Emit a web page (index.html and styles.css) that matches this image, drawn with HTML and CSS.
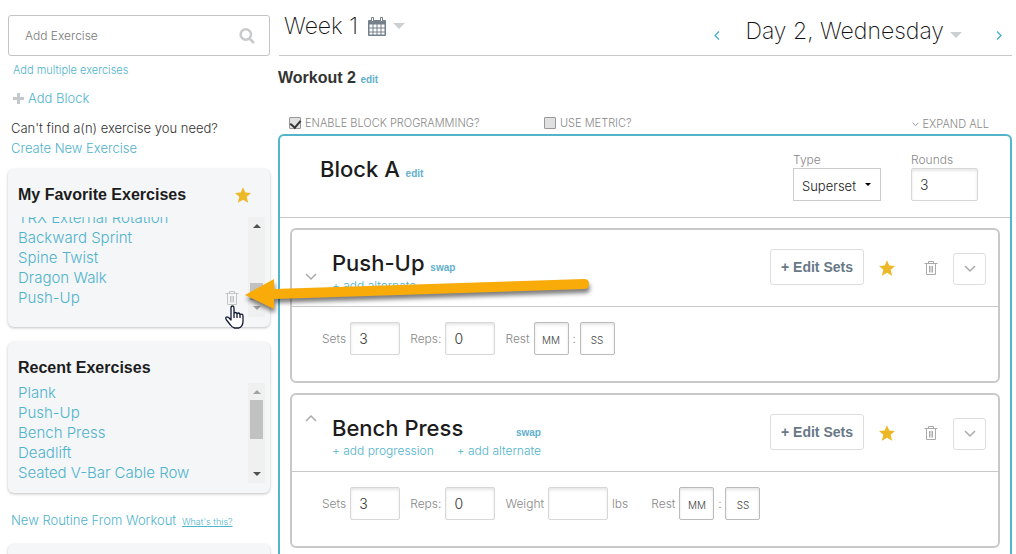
FILE: index.html
```
<!DOCTYPE html>
<html lang="en">
  <head>
    <meta charset="utf-8">
    <meta name="viewport" content="width=device-width, initial-scale=1">
    <title>Workout Builder</title>
    <link rel="stylesheet" href="styles.css">
  </head>
  <body>
    <!-- shared icons -->
    <svg class="sprite" aria-hidden="true">
      <symbol id="star" viewBox="0 0 16 16">
        <path fill="#ecb827" d="M8 .2l2.300 5.300 5.700.5-4.300 3.800 1.400 6L8 12.800l-5.100 3 1.400-6L0 6l5.700-.5z"/>
      </symbol>
      <symbol id="trash" viewBox="0 0 14 15">
        <path fill="none" stroke="currentColor" d="M.5 2.500h13M4.500 2V.5h5V2M2.500 3v10.500h9V3M5.500 5v6.500M7 5v6.500M8.500 5v6.500"/>
      </symbol>
      <symbol id="chevron" viewBox="0 0 12 8">
        <path fill="none" stroke="currentColor" stroke-width="1.500" d="M1 1l5 5 5-5"/>
      </symbol>
    </svg>

    <div class="page">
      <aside class="sidebar">
        <div class="search">
          <input type="text" placeholder="Add Exercise" aria-label="Add Exercise">
          <svg width="16" height="16" viewBox="0 0 16 16"><path fill="none" stroke="#c8cacb" stroke-width="2.500" d="M10.500 10.500l4.500 4.500M12 6.500a5.200 5.200 0 1 1-10.400 0a5.200 5.200 0 1 1 10.400 0z"/></svg>
        </div>
        <a class="add-multiple" href="#">Add multiple exercises</a>
        <a class="add-block" href="#"><svg width="11" height="11" viewBox="0 0 11 11"><path stroke="#c4c8ca" stroke-width="3" d="M0 5.500h11M5.500 0v11"/></svg>Add Block</a>
        <p class="help">Can't find a(n) exercise you need?<br><a href="#">Create New Exercise</a></p>

        <section class="panel favorites">
          <h3>My Favorite Exercises <svg width="16" height="16"><use href="#star"/></svg></h3>
          <div class="list">
            <ul>
              <li><a href="#">TRX External Rotation</a></li>
              <li><a href="#">Backward Sprint</a></li>
              <li><a href="#">Spine Twist</a></li>
              <li><a href="#">Dragon Walk</a></li>
              <li class="hovered"><a href="#">Push-Up</a><svg width="14" height="15"><use href="#trash"/></svg></li>
            </ul>
            <div class="scrollbar at-end"><i class="up"></i><span></span><i class="down"></i></div>
          </div>
        </section>

        <section class="panel recent">
          <h3>Recent Exercises</h3>
          <div class="list">
            <ul>
              <li><a href="#">Plank</a></li>
              <li><a href="#">Push-Up</a></li>
              <li><a href="#">Bench Press</a></li>
              <li><a href="#">Deadlift</a></li>
              <li><a href="#">Seated V-Bar Cable Row</a></li>
            </ul>
            <div class="scrollbar at-start"><i class="up"></i><span></span><i class="down"></i></div>
          </div>
        </section>

        <p class="routine"><a href="#">New Routine From Workout</a> <a class="whats-this" href="#">What's this?</a></p>
        <section class="panel next"></section>
      </aside>

      <main>
        <header class="schedule">
          <h1>Week 1
            <svg width="18" height="19" viewBox="0 0 18 19"><path fill="#74818c" d="M0 4q0-1 1-1h16q1 0 1 1v14q0 1-1 1H1q-1 0-1-1z"/><path fill="#fff" d="M1.500 7.500h3v3h-3zM5.500 7.500h3v3h-3zM9.500 7.500h3v3h-3zM13.500 7.500h3v3h-3zM1.500 11.500h3v3h-3zM5.500 11.500h3v3h-3zM9.500 11.500h3v3h-3zM13.500 11.500h3v3h-3zM1.500 15.500h3v2h-3zM5.500 15.500h3v2h-3zM9.500 15.500h3v2h-3zM13.500 15.500h3v2h-3z"/><path fill="#fff" stroke="#74818c" d="M3.500.5h2v4h-2zM12.500.5h2v4h-2z"/></svg>
            <i class="caret"></i>
          </h1>
          <nav>
            <a href="#" aria-label="Previous day"><svg width="6" height="9" viewBox="0 0 6 9"><path fill="none" stroke="currentColor" stroke-width="1.500" d="M5 .5l-4 4 4 4"/></svg></a>
            <h1>Day 2, Wednesday <i class="caret"></i></h1>
            <a href="#" aria-label="Next day"><svg width="6" height="9" viewBox="0 0 6 9"><path fill="none" stroke="currentColor" stroke-width="1.500" d="M1 .5l4 4-4 4"/></svg></a>
          </nav>
        </header>

        <h2 class="workout">Workout 2 <a class="small" href="#">edit</a></h2>

        <div class="options">
          <label class="enable"><input type="checkbox" checked> ENABLE BLOCK PROGRAMMING?</label>
          <label><input type="checkbox"> USE METRIC?</label>
          <button class="expand" type="button"><svg width="7" height="5" viewBox="0 0 12 8"><use href="#chevron"/></svg> EXPAND ALL</button>
        </div>

        <section class="block">
          <header class="block-head">
            <h2>Block A <a class="small" href="#">edit</a></h2>
            <div class="field">
              <label for="type">Type</label>
              <div class="select"><select id="type"><option>Superset</option></select></div>
            </div>
            <div class="field rounds">
              <label for="rounds">Rounds</label>
              <input id="rounds" type="text" value="3">
            </div>
          </header>

          <article class="exercise">
            <header>
              <button class="toggle" type="button" aria-label="Expand"><svg width="12" height="8"><use href="#chevron"/></svg></button>
              <div class="name">
                <h2>Push-Up <a class="small" href="#">swap</a></h2>
                <p><a href="#">+ add alternate</a></p>
              </div>
              <div class="actions">
                <button class="edit-sets" type="button">+ Edit Sets</button>
                <button class="icon" type="button" aria-label="Favorite"><svg width="16" height="16"><use href="#star"/></svg></button>
                <button class="icon trash" type="button" aria-label="Delete"><svg width="14" height="15"><use href="#trash"/></svg></button>
                <button class="more" type="button" aria-label="More"><svg width="12" height="8"><use href="#chevron"/></svg></button>
              </div>
            </header>
            <div class="sets">
              <label>Sets <input type="text" value="3"></label>
              <label>Reps: <input type="text" value="0"></label>
              <label>Rest <input class="time" type="text" placeholder="MM"></label>
              <span class="colon">:</span>
              <input class="time" type="text" placeholder="SS" aria-label="Rest seconds">
            </div>
          </article>

          <article class="exercise open">
            <header>
              <button class="toggle" type="button" aria-label="Collapse"><svg width="12" height="8"><use href="#chevron"/></svg></button>
              <div class="name">
                <h2>Bench Press <a class="small" href="#">swap</a></h2>
                <p><a href="#">+ add progression</a><a href="#">+ add alternate</a></p>
              </div>
              <div class="actions">
                <button class="edit-sets" type="button">+ Edit Sets</button>
                <button class="icon" type="button" aria-label="Favorite"><svg width="16" height="16"><use href="#star"/></svg></button>
                <button class="icon trash" type="button" aria-label="Delete"><svg width="14" height="15"><use href="#trash"/></svg></button>
                <button class="more" type="button" aria-label="More"><svg width="12" height="8"><use href="#chevron"/></svg></button>
              </div>
            </header>
            <div class="sets">
              <label>Sets <input type="text" value="3"></label>
              <label>Reps: <input type="text" value="0"></label>
              <label class="weight">Weight <input type="text"> lbs</label>
              <label>Rest <input class="time" type="text" placeholder="MM"></label>
              <span class="colon">:</span>
              <input class="time" type="text" placeholder="SS" aria-label="Rest seconds">
            </div>
          </article>
        </section>
      </main>
    </div>

    <!-- arrow and hand pointing at the delete icon -->
    <svg class="arrow" width="360" height="50" viewBox="0 0 360 50" aria-hidden="true">
      <path fill="#f8ab09" d="M5 25L34 9v10L344 9q5 0 5 5t-5 5L34 29v10z"/>
    </svg>
    <svg class="hand" width="19" height="24" viewBox="0 0 19 24" aria-hidden="true">
      <path fill="#fff" stroke="#111a33" stroke-width="1.300" stroke-linejoin="round" d="M6 14V3q0-2 1.500-2T9 3v6q0-1.500 1.500-1.500T12 9.500q0-1.500 1.500-1.500T15 10.500q0-1.300 1.500-1.300T18 11v5q0 6-4.500 7h-4Q7 22.500 5.500 20L1.500 15q-1.500-2.500 0-3t4.500 3zM9 9v4M12 10v3M15 11v2"/>
    </svg>
  </body>
</html>
```
FILE: styles.css
```
* { box-sizing: border-box; }
body { margin: 0; background: #fff; color: #333; font: 300 13px/20px Inter, "Liberation Sans", sans-serif; }
h1, h2, h3, p, ul { margin: 0; padding: 0; }
ul { list-style: none; }
a { color: #4fb3cc; text-decoration: none; }
svg { display: block; flex: none; }
button { margin: 0; padding: 0; border: 0; background: none; font: inherit; color: #aaa; }
input { font: inherit; }
input[type="text"] { border: 1px solid #d8d8d8; border-radius: 2px; background: #fff; box-shadow: inset 0 2px 3px rgba(0,0,0,0.1); color: #333; outline: 0; }
.sprite { position: absolute; width: 0; height: 0; }
.page { display: grid; grid-template-columns: 262px 1fr; gap: 8px; padding: 0 4px 0 8px; height: 100vh; overflow: hidden; }

/* sidebar */
.sidebar { padding-top: 15px; }
.search { display: flex; align-items: center; height: 41px; padding: 0 14px 0 16px; border: 1px solid #c4c4c4; border-radius: 3px; }
.search input[type="text"] { flex: 1; min-width: 0; padding: 0; border: 0; box-shadow: none; font-size: 12px; }
::placeholder { color: #777; opacity: 1; }
.add-multiple { display: block; margin: 4px 0 0 5px; font-size: 11px; }
.add-block { display: flex; align-items: center; gap: 4px; margin: 8px 0 0 5px; }
.help { margin: 10px 0 11px 3px; }
.panel { border-radius: 6px; background: #f4f6f8; box-shadow: 0 1px 3px rgba(0,0,0,0.25); padding: 16px 5px 10px 10px; }
.panel h3 { display: flex; justify-content: space-between; align-items: center; padding-right: 14px; font: bold 16px/20px "Liberation Sans", sans-serif; color: #1c1c1c; }
.favorites { margin-bottom: 15px; }
.list { display: flex; height: 100px; overflow: hidden; font-size: 15px; }
.favorites .list { margin-top: 12px; }
.recent .list { margin-top: 5px; }
.list ul { flex: 1; display: flex; flex-direction: column; }
.favorites ul { justify-content: flex-end; padding-bottom: 9px; }
.list li { flex: none; height: 20px; }
.hovered { display: flex; justify-content: space-between; align-items: center; padding-right: 9px; color: #c4c4c4; }
.scrollbar { display: flex; flex-direction: column; align-items: center; width: 17px; padding: 7px 0; background: #f0f0f0; }
.scrollbar i { border: 4px solid transparent; }
.scrollbar .up { border-top: 0; border-bottom-color: #505050; }
.scrollbar .down { border-bottom: 0; border-top-color: #505050; }
.scrollbar span { width: 13px; background: #c1c1c1; }
.at-start span { height: 39px; margin: 6px 0 auto; }
.at-end span { height: 17px; margin: auto 0 6px; }
.at-start .up { border-bottom-color: #a3a3a3; }
.at-end .down { border-top-color: #a3a3a3; }
.routine { margin: 17px 0 12px 3px; }
.whats-this { margin-left: 2px; font-size: 9px; text-decoration: underline; }
.next { height: 60px; }

/* main */
.schedule { display: flex; justify-content: space-between; height: 56px; padding: 0 10px 0 5px; border-bottom: 1px solid #c8c8c8; margin-left: 1px; }
h1 { display: flex; align-items: center; gap: 7px; height: 52px; font-size: 23px; font-weight: 200; color: #111; }
.schedule > h1 svg { margin-left: 3px; }
nav { display: flex; align-items: center; padding-top: 15px; }
nav h1 { gap: 6px; margin: -8px 34px 0 25px; }
.caret { border: 6px solid transparent; border-top-color: #ccd0d3; border-bottom: 0; }
nav .caret { margin-top: 8px; }
.small { font: bold 10px "Liberation Sans", sans-serif; color: #62b0cb; }
.workout { margin-top: 12px; font: bold 16px/20px "Liberation Sans", sans-serif; }
.options { display: flex; align-items: center; height: 46px; padding: 24px 23px 0 11px; font-size: 11px; color: #888; }
.options label { display: flex; align-items: center; gap: 4px; }
.options .enable { width: 255px; }
.options input { appearance: none; display: grid; place-items: center; width: 12px; height: 12px; margin: 0; border: 1px solid #999; border-radius: 1px; background: #e0e0e0; }
.options input:checked::after { content: ""; width: 5px; height: 8px; margin-bottom: 2px; border: solid #333; border-width: 0 2px 2px 0; transform: rotate(40deg); }
.expand { display: flex; align-items: center; gap: 3px; margin: 2px 0 0 auto; color: #888; }
.block { border: 2px solid #52b5cb; border-bottom: 0; border-radius: 6px 6px 0 0; min-height: 460px; }
.block h2, .name h2 { font: 500 22px/26px Inter, "Liberation Sans", sans-serif; color: #1c1c1c; }
.block-head { display: flex; height: 82px; padding: 14px 32px 0 40px; border-bottom: 1px solid #c8c8c8; }
.block-head h2 { flex: 1; padding-top: 6px; }
.field { width: 88px; font-size: 12px; color: #888; }
.field label { display: block; height: 18px; }
.rounds { width: 67px; margin-left: 30px; }
.rounds input { width: 100%; height: 33px; padding: 0 8px; font-size: 14px; }
.select { position: relative; }
.select select { appearance: none; width: 100%; height: 33px; padding: 2px 8px 0; border: 1px solid #ccc; background: #fff; color: #222; font: inherit; font-size: 13px; }
.select::after { content: ""; position: absolute; right: 10px; top: 15px; border: 3px solid transparent; border-top-color: #000; border-bottom: 0; }
.exercise { margin: 10px 10px 0; border: 2px solid #c8c8c8; border-radius: 6px; }
.exercise header { display: flex; height: 77px; border-bottom: 1px solid #c8c8c8; padding-right: 12px; }
.toggle { align-self: flex-start; margin: 43px 15px 0 13px; }
.open .toggle { margin-top: 19px; }
.open .toggle svg { transform: rotate(180deg); }
.name { padding-top: 20px; }
.name p { display: flex; gap: 23px; font-size: 12px; }
.open h2 { display: flex; justify-content: space-between; align-items: center; }
.open .small { padding-top: 8px; }
.actions { display: flex; align-items: flex-end; margin-left: auto; height: 55px; }
.edit-sets { width: 94px; height: 36px; border: 1px solid #ddd; border-radius: 3px; font: bold 14px "Liberation Sans", sans-serif; color: #687887; }
.icon { margin: 0 0 9px 15px; }
.trash { margin: 0 15px 9px 29px; }
.more { display: grid; place-items: center; width: 33px; height: 32px; border: 1px solid #ddd; border-radius: 3px; }
.sets { display: flex; align-items: flex-start; gap: 10px; height: 74px; padding: 15px 30px; font-size: 12px; color: #888; }
.sets label { display: flex; align-items: center; gap: 4px; }
.sets input[type="text"] { width: 50px; height: 33px; padding: 0 8px; font-size: 14px; }
.sets input.time { width: 35px; padding: 3px 0 0; font-size: 10px; text-align: center; border-color: #bbb; }
.sets .time::placeholder { color: #444; }
.weight { margin-right: 13px; }
.sets .weight input { width: 60px; }
.colon { width: 11px; margin: 0 -10px; line-height: 33px; text-align: center; }

.arrow { position: absolute; left: 240px; top: 270px; filter: drop-shadow(1px 4px 2px rgba(0,0,0,0.5)); }
.hand { position: absolute; left: 225px; top: 305px; }
```
